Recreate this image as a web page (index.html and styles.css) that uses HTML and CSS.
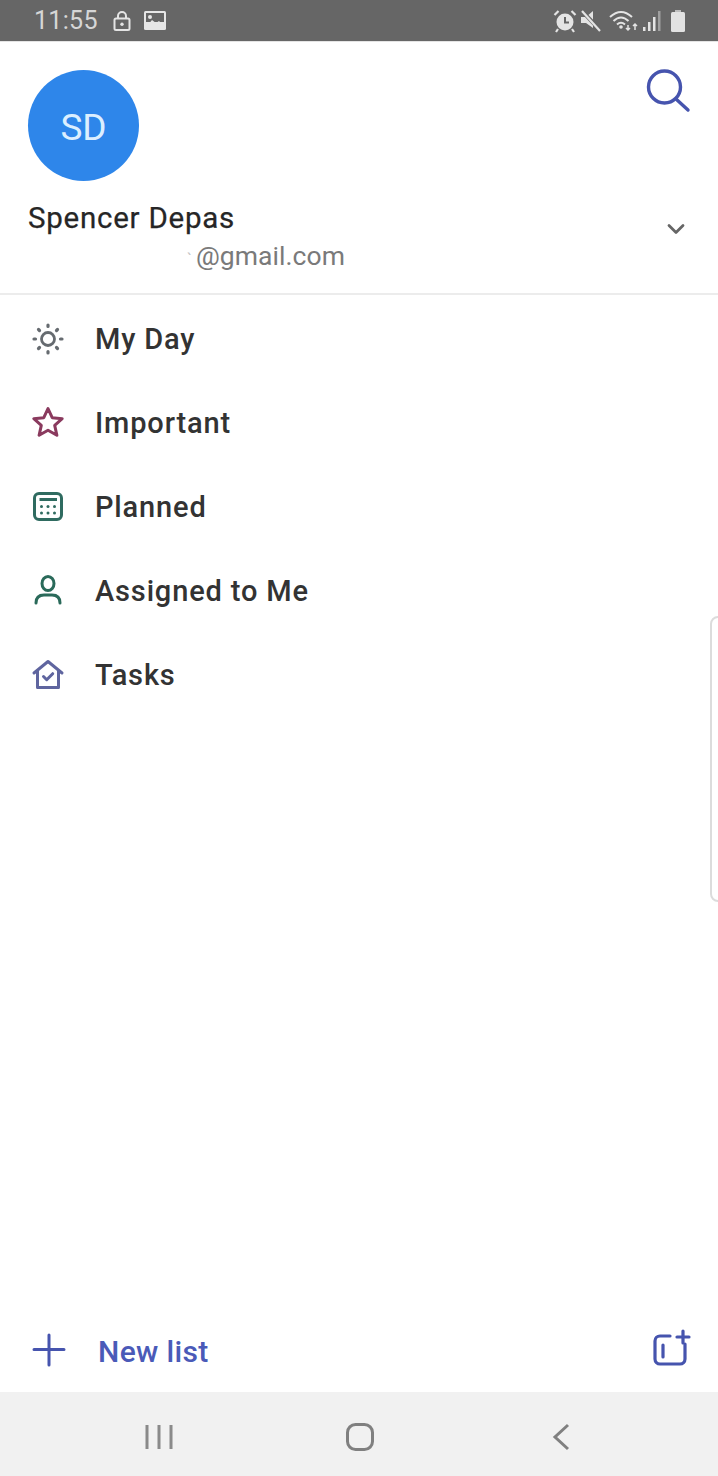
FILE: index.html
```html
<!DOCTYPE html>
<html lang="en">
<head>
<meta charset="utf-8">
<title>Microsoft To Do menu</title>
<link rel="stylesheet" href="styles.css">
</head>
<body>
<div class="app">
  <header class="status">
    <div class="status-left">
      <span class="time">11:55</span>
      <svg class="st-lock" width="20" height="22" viewBox="0 0 20 22"><rect x="2.500" y="8.500" width="15" height="11.500" rx="1.500" fill="none" stroke="#e4e4e4" stroke-width="2"/><path d="M6 8.500V6a4 4 0 0 1 8 0v2.500" fill="none" stroke="#e4e4e4" stroke-width="2"/><circle cx="10" cy="14.200" r="1.700" fill="#e4e4e4"/></svg>
      <svg class="st-img" width="22" height="20" viewBox="0 0 22 20"><rect width="22" height="19" rx="1.500" fill="#e6e6e6"/><rect x="2" y="2" width="18" height="9" fill="#666"/><path d="M2 16l6-7 4 3 3-2 5 5v1H2z" fill="#e6e6e6"/><circle cx="6" cy="6" r="2" fill="#e6e6e6"/></svg>
    </div>
    <div class="status-right">
      <svg width="24" height="24" viewBox="0 0 24 24"><circle cx="12" cy="13" r="8.500" fill="#e4e4e4"/><path d="M12 8v5.500h4" fill="none" stroke="#666" stroke-width="2"/><path d="M1.500 6l4-4M22.500 6l-4-4M5 20l-2 3M19 20l2 3" stroke="#e4e4e4" stroke-width="2.200"/></svg>
      <svg width="22" height="24" viewBox="0 0 22 24"><path d="M1 8h5l7-6v17l-7-5H1z" fill="#e4e4e4"/><path d="M1 1l19 20" stroke="#666" stroke-width="4"/><path d="M2 2l18 20" stroke="#e4e4e4" stroke-width="2.200"/></svg>
      <svg class="st-wifi" width="30" height="24" viewBox="0 0 30 24"><path d="M1 8q11-10 22 0M4.500 12q7.500-7 15 0M8 15.500q4-3.500 8 0" fill="none" stroke="#e4e4e4" stroke-width="2"/><circle cx="12" cy="18" r="1.800" fill="#e4e4e4"/><path d="M19 16v5M17 19l2 2 2-2M26 21v-6M24 17l2-2 2 2" fill="none" stroke="#e4e4e4" stroke-width="1.500"/></svg>
      <svg width="20" height="24" viewBox="0 0 20 24"><rect x="1" y="18" width="2.500" height="4" fill="#e4e4e4"/><rect x="6" y="13" width="2.500" height="9" fill="#e4e4e4"/><rect x="11" y="8" width="2.500" height="14" fill="#e4e4e4"/><rect x="16" y="2" width="2.500" height="20" fill="#a0a0a0"/></svg>
      <svg class="st-batt" width="16" height="24" viewBox="0 0 16 24"><rect x="5" y="1" width="6" height="3" fill="#bdbdbd"/><rect x="1" y="3" width="14" height="20" rx="1.500" fill="#e2e2e2"/></svg>
    </div>
  </header>

  <section class="account">
    <div class="account-top">
      <div class="avatar"><span>SD</span></div>
      <svg class="search" width="46" height="46" viewBox="0 0 46 46"><circle cx="19.500" cy="19" r="16" fill="none" stroke="#4654ae" stroke-width="3.400"/><path d="M31 31l12 11" fill="none" stroke="#4654ae" stroke-width="3.400" stroke-linecap="round"/></svg>
    </div>
    <div class="account-info">
      <div>
        <div class="account-name">Spencer Depas</div>
        <div class="account-mail"><span class="tick">`</span><span class="mail">@gmail.com</span></div>
      </div>
      <svg class="chevron" width="18" height="12" viewBox="0 0 18 12"><path d="M2 2.500l7 7 7-7" fill="none" stroke="#666" stroke-width="2.800" stroke-linecap="round" stroke-linejoin="round"/></svg>
    </div>
  </section>

  <nav class="lists">
    <a class="row">
      <svg class="ico" width="40" height="40" viewBox="0 0 40 40"><circle cx="20" cy="20" r="6.500" fill="none" stroke="#666b70" stroke-width="2.800"/><g stroke="#666b70" stroke-width="3.200" stroke-linecap="round"><path d="M20 6v1.500M20 32.500V34M6 20h1.500M32.500 20H34M10.500 10.500l1 1M28.500 28.500l1 1M29.500 10.500l-1 1M11.500 28.500l-1 1"/></g></svg>
      <span>My Day</span>
    </a>
    <a class="row">
      <svg class="ico" width="40" height="40" viewBox="0 0 40 40"><path d="M20 5.500l4.200 9.200 10 1-7.500 6.700 2.200 9.900L20 27.200l-8.900 5.100 2.200-9.900-7.500-6.700 10-1z" fill="none" stroke="#8a3a5e" stroke-width="3" stroke-linejoin="round"/></svg>
      <span>Important</span>
    </a>
    <a class="row">
      <svg class="ico" width="40" height="40" viewBox="0 0 40 40"><rect x="6.500" y="6.500" width="27" height="26" rx="4.500" fill="none" stroke="#2f6b60" stroke-width="3"/><path d="M11.500 12.500h17.500" stroke="#2f6b60" stroke-width="3"/><g fill="#2f6b60"><circle cx="13.500" cy="19.500" r="1.500"/><circle cx="20" cy="19.500" r="1.500"/><circle cx="26.500" cy="19.500" r="1.500"/><circle cx="13.500" cy="26" r="1.500"/><circle cx="20" cy="26" r="1.500"/><circle cx="26.500" cy="26" r="1.500"/></g></svg>
      <span>Planned</span>
    </a>
    <a class="row">
      <svg class="ico" width="40" height="40" viewBox="0 0 40 40"><ellipse cx="20" cy="12.500" rx="6" ry="7" fill="none" stroke="#2a6a5a" stroke-width="3"/><path d="M8 32q0-8 8-8h8q8 0 8 8" fill="none" stroke="#2a6a5a" stroke-width="3" stroke-linecap="round"/></svg>
      <span>Assigned to Me</span>
    </a>
    <a class="row">
      <svg class="ico" width="40" height="40" viewBox="0 0 40 40"><path d="M6 18L20 6.500 34 18M9.500 16v16.500h21V16" fill="none" stroke="#5f659f" stroke-width="3" stroke-linecap="round" stroke-linejoin="round"/><path d="M15.500 21.500l3.200 3.200 6-6" fill="none" stroke="#5f659f" stroke-width="3" stroke-linecap="round" stroke-linejoin="round"/></svg>
      <span>Tasks</span>
    </a>
  </nav>

  <div class="edge-handle"></div>

  <footer class="newlist">
    <div class="new-left">
      <svg class="plus" width="34" height="34" viewBox="0 0 34 34"><path d="M17 2v30M2 16.500h30" fill="none" stroke="#4654ae" stroke-width="3" stroke-linecap="round"/></svg>
      <span class="new-label">New list</span>
    </div>
    <svg class="group" width="40" height="40" viewBox="0 0 40 40"><path d="M18 7H8a5 5 0 0 0-5 5v18a5 5 0 0 0 5 5h20a5 5 0 0 0 5-5V15" fill="none" stroke="#4654ae" stroke-width="3.200" stroke-linecap="round"/><path d="M11 16v12M31 2v12M25 8h12" fill="none" stroke="#4654ae" stroke-width="3.200" stroke-linecap="round"/></svg>
  </footer>

  <div class="sysnav">
    <svg class="n-recent" width="28" height="26" viewBox="0 0 28 26"><path d="M2 1v24M14 1v24M26 1v24" stroke="#8a8a8a" stroke-width="3"/></svg>
    <svg class="n-home" width="28" height="28" viewBox="0 0 28 28"><rect x="1.500" y="1.500" width="25" height="25" rx="8" fill="none" stroke="#808080" stroke-width="3"/></svg>
    <svg class="n-back" width="18" height="28" viewBox="0 0 18 28"><path d="M16 2L3 14l13 12" fill="none" stroke="#808080" stroke-width="3"/></svg>
  </div>
</div>
</body>
</html>
```
FILE: styles.css
```css
* { box-sizing: border-box; }
html, body { margin: 0; padding: 0; background: #fff; }
body { font-family: Roboto, "Liberation Sans", sans-serif; color: #2b2b2b; }
.app {
  position: relative;
  width: 718px;
  height: 1476px;
  display: flex;
  flex-direction: column;
  overflow: hidden;
}
.status {
  height: 42px;
  flex: none;
  background: #666;
  border-bottom: 1px solid #e4e4e4;
  display: flex;
  justify-content: space-between;
  align-items: center;
  padding: 0 32px 0 34px;
}
.status-left { display: flex; align-items: center; }
.time { font-size: 25px; color: #d6d6d6; width: 64px; line-height: 41px; letter-spacing: 0.3px; }
.st-lock { margin-left: 14px; }
.st-img { margin-left: 12px; }
.status-right { display: flex; align-items: center; gap: 3px; }
.st-wifi { margin-left: 4px; }
.st-batt { margin-left: 5px; }

.account {
  flex: none;
  height: 253px;
  padding: 28px 27px 0 28px;
  border-bottom: 2px solid #ececec;
}
.account-top { display: flex; justify-content: space-between; align-items: flex-start; }
.avatar {
  width: 111px;
  height: 111px;
  border-radius: 50%;
  background: #2e86ea;
  color: #dcefff;
  font-size: 37px;
  padding-top: 3px;
  display: flex;
  align-items: center;
  justify-content: center;
}
.search { margin-top: -2px; }
.account-info {
  display: flex;
  justify-content: space-between;
  align-items: center;
  margin-top: 19px;
  padding-right: 1px;
}
.account-name { font-size: 29.500px; line-height: 36px; color: #262626; letter-spacing: 0.75px; -webkit-text-stroke: 0.25px #262626; }
.account-mail { display: flex; align-items: baseline; height: 34px; margin-top: 4px; padding-left: 159px; }
.tick { font-size: 16px; color: #c4c4c4; width: 9px; }
.mail { font-size: 26.500px; color: #7a7a7a; letter-spacing: 0.05px; }
.chevron { margin: 0 5px 16px 0; }

.lists { flex: 1; padding-top: 2px; }
.row {
  height: 84px;
  display: flex;
  align-items: center;
  padding-left: 28px;
  font-size: 29px;
  font-weight: 500;
  letter-spacing: 0.85px;
  color: #333;
}
.row span { margin-top: -1px; }
.ico { flex: none; margin-right: 27px; }

.edge-handle {
  position: absolute;
  right: -8px;
  top: 616px;
  width: 16px;
  height: 286px;
  border: 2px solid #dcdcdc;
  border-radius: 8px;
  background: #fff;
}

.newlist {
  flex: none;
  height: 82px;
  display: flex;
  justify-content: space-between;
  align-items: center;
  padding: 0 26px 0 32px;
}
.new-left { display: flex; align-items: center; }
.plus { margin-top: -2px; }
.new-label { font-size: 30px; font-weight: 500; letter-spacing: 0.35px; color: #4a5ab8; margin-left: 32px; }
.group { margin-bottom: 4px; }

.sysnav {
  flex: none;
  height: 84px;
  background: #f1f1f1;
  display: grid;
  grid-template-columns: repeat(3, 201px);
  padding: 6px 0 0 58px;
  align-items: center;
  justify-items: center;
}
```
